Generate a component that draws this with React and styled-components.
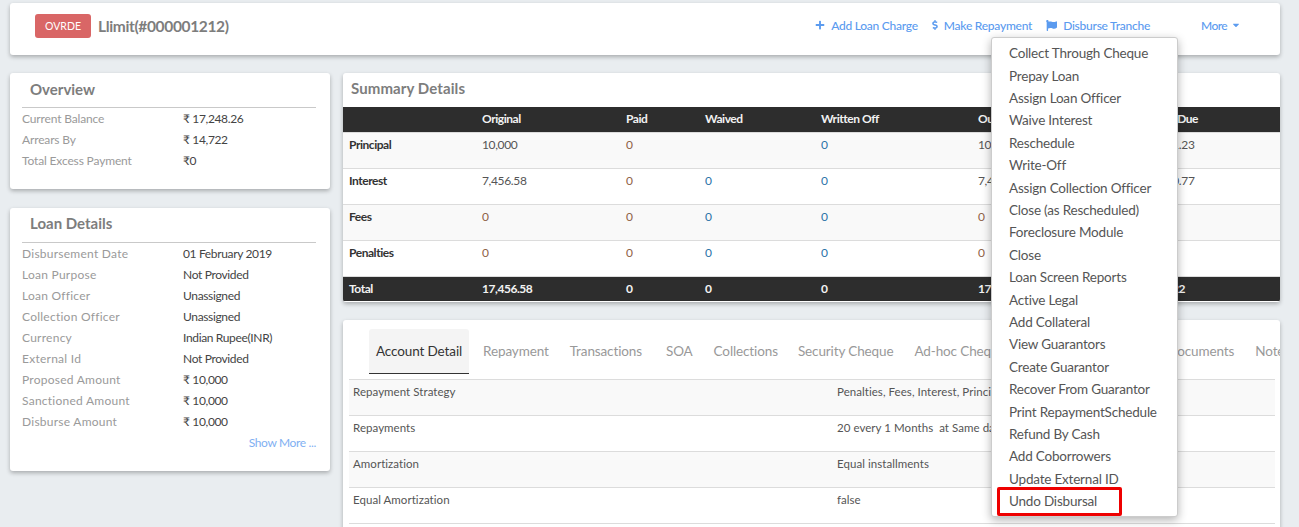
import React from "react";
import styled, { createGlobalStyle } from "styled-components";
import { FaPlus, FaDollarSign, FaFlag, FaCaretDown } from "react-icons/fa";

const GlobalStyle = createGlobalStyle`
  html, body {
    margin: 0;
    padding: 0;
    height: 527px;
    overflow: hidden;
    background: #e9edf0;
    font-family: "Lato", "Open Sans", sans-serif;
  }
  * { box-sizing: border-box; }
`;

const Page = styled.div`
  position: relative;
  width: 1280px;
  padding: 3px 0 0 10px;
`;

const Card = styled.div`
  background: #fff;
  border-radius: 3px;
  box-shadow: 0 2px 4px rgba(0, 0, 0, 0.28);
`;

const Header = styled(Card)`
  height: 52px;
  display: flex;
  align-items: center;
  padding: 0 39px 6px 25px;
  margin-bottom: 18px;
`;

const Badge = styled.span`
  width: 56px;
  height: 24px;
  border-radius: 3px;
  background: #d96666;
  color: #fff;
  font-size: 10.5px;
  display: flex;
  align-items: center;
  justify-content: center;
`;

const Title = styled.div`
  margin-left: 7px;
  padding-bottom: 1px;
  font-size: 15.5px;
  letter-spacing: -0.35px;
  font-weight: 700;
  color: #7d7d7d;
  flex: 1;
`;

const Action = styled.a`
  display: flex;
  align-items: center;
  gap: ${(p) => p.$gap || 6}px;
  margin-left: ${(p) => p.$left || 14}px;
  padding-bottom: 2px;
  font-size: 12px;
  letter-spacing: ${(p) => p.$spacing ?? -0.25}px;
  font-weight: 500;
  color: #5b9bef;
  svg { font-size: ${(p) => p.$icon || 10}px; }
`;

const Columns = styled.div`
  display: grid;
  grid-template-columns: 320px 937px;
  gap: 13px;
  align-items: start;
`;

const Side = styled.div`
  display: flex;
  flex-direction: column;
  gap: 19px;
`;

const Main = styled.div`
  display: flex;
  flex-direction: column;
  gap: 18px;
`;

const InfoCard = styled(Card)`
  padding: 5px 14px 0 12px;
  height: ${(p) => p.$height}px;
`;

const InfoTitle = styled.h3`
  margin: 0;
  padding: 0 0 0 8px;
  height: 30px;
  line-height: ${(p) => p.$line || 21}px;
  font-size: 15px;
  font-weight: 700;
  color: #7d7d7d;
  border-bottom: 1px solid #c9c9c9;
`;

const InfoRow = styled.div`
  display: grid;
  grid-template-columns: 161px 1fr;
  height: 21px;
  line-height: 21px;
  font-size: 12px;
`;

const InfoLabel = styled.span`
  color: #9a9a9a;
  letter-spacing: ${(p) => (p.$tight ? -0.15 : 0.25)}px;
`;

const InfoValue = styled.span`
  color: #444;
  letter-spacing: -0.35px;
`;

const ShowMore = styled.div`
  height: 21px;
  line-height: 21px;
  text-align: right;
  font-size: 12px;
  letter-spacing: -0.35px;
  color: #7fb0f2;
`;

const SummaryCard = styled(Card)`
  height: 229px;
  overflow: hidden;
`;

const SummaryTitle = styled.h3`
  margin: 0;
  height: 34px;
  padding: 4px 0 0 8px;
  line-height: 23px;
  font-size: 15px;
  letter-spacing: 0.1px;
  font-weight: 700;
  color: #7d7d7d;
`;

const Table = styled.table`
  width: 937px;
  border-collapse: collapse;
  table-layout: fixed;
  font-size: 12px;
  letter-spacing: -0.35px;
`;

const HeadCell = styled.th`
  height: 25px;
  padding: 0 6px ${(p) => p.$lift || 0}px;
  background: #2d2d2d;
  color: #f2f2f2;
  font-weight: 700;
  text-align: left;
  letter-spacing: -0.45px;
`;

const BodyRow = styled.tr`
  background: ${(p) => (p.$striped ? "#f9f9f9" : "#fff")};
  border-top: 1px solid #dcdcdc;
`;

const FootRow = styled.tr`
  border-top: 1px solid #dcdcdc;
`;

const Cell = styled.td`
  height: 36px;
  padding: 4px 6px 0;
  vertical-align: top;
  line-height: 16px;
  color: ${(p) => (p.$link ? "#2b74a8" : p.$paid ? "#8f6247" : "#555")};
  font-weight: ${(p) => (p.$head ? 700 : 400)};
  ${(p) => p.$head && "color: #333; letter-spacing: -0.45px;"}
`;

const TabsCard = styled(Card)`
  height: 220px;
  padding: 9px 5px 0 6px;
  overflow: hidden;
`;

const TabBar = styled.div`
  display: flex;
  padding-left: 20px;
  height: 51px;
  border-bottom: 1px solid #dcdcdc;
  white-space: nowrap;
`;

const Tab = styled.div`
  height: 45px;
  line-height: 44px;
  padding: 0 7px;
  margin-right: ${(p) => p.$gap ?? 7}px;
  font-size: 13.5px;
  letter-spacing: -0.12px;
  color: ${(p) => (p.$active ? "#333" : "#999")};
  background: ${(p) => (p.$active ? "#f4f4f4" : "transparent")};
  border-bottom: ${(p) => (p.$active ? "1px solid #333" : "none")};
  border-radius: 3px 3px 0 0;
  flex-shrink: 0;
`;

const DetailRow = styled.div`
  display: grid;
  grid-template-columns: 484px 1fr;
  height: 36px;
  padding: 4px 4px 0;
  line-height: 16px;
  font-size: 11.5px;
  letter-spacing: 0.05px;
  color: #555;
  background: ${(p) => (p.$striped ? "#f9f9f9" : "#fff")};
  border-bottom: 1px solid #dcdcdc;
  white-space: pre;
`;

const Menu = styled.div`
  position: absolute;
  left: 991px;
  top: 37px;
  width: 187px;
  height: 480px;
  padding: 4.3px 0 0 17px;
  background: #fff;
  border: 1px solid #ccc;
  border-radius: 3px;
  box-shadow: 0 3px 10px rgba(0, 0, 0, 0.3);
`;

const MenuItem = styled.div`
  height: 22.4px;
  line-height: 22.4px;
  font-size: 13.5px;
  letter-spacing: -0.2px;
  color: #555;
  white-space: nowrap;
`;

const Highlight = styled.div`
  position: absolute;
  left: 5px;
  top: 449px;
  width: 125px;
  height: 29px;
  border: 3px solid #ee0000;
  border-radius: 2px;
`;

const overview = [
  ["Current Balance", "₹ 17,248.26"],
  ["Arrears By", "₹ 14,722"],
  ["Total Excess Payment", "₹0"],
];

const loanDetails = [
  ["Disbursement Date", "01 February 2019"],
  ["Loan Purpose", "Not Provided"],
  ["Loan Officer", "Unassigned"],
  ["Collection Officer", "Unassigned"],
  ["Currency", "Indian Rupee(INR)"],
  ["External Id", "Not Provided"],
  ["Proposed Amount", "₹ 10,000"],
  ["Sanctioned Amount", "₹ 10,000"],
  ["Disburse Amount", "₹ 10,000"],
];

const colWidths = [133, 144, 79, 116, 157, 172, 136];
const headings = ["", "Original", "Paid", "Waived", "Written Off", "Outstanding", "Over Due"];

const summaryRows = [
  ["Principal", "10,000", "0", "", "0", "10,000", "7,291.23"],
  ["Interest", "7,456.58", "0", "0", "0", "7,456.58", "7,430.77"],
  ["Fees", "0", "0", "0", "0", "0", ""],
  ["Penalties", "0", "0", "0", "0", "0", ""],
];

const totals = ["Total", "17,456.58", "0", "0", "0", "17,456.58", "14,722"];

const tabs = [
  { label: "Account Detail" },
  { label: "Repayment" },
  { label: "Transactions", gap: 10 },
  { label: "SOA" },
  { label: "Collections", gap: 6 },
  { label: "Security Cheque" },
  { label: "Ad-hoc Cheques", gap: 142 },
  { label: "Documents" },
  { label: "Notes" },
];

const details = [
  ["Repayment Strategy", "Penalties, Fees, Interest, Principal order"],
  ["Repayments", "20 every 1 Months  at Same day of month"],
  ["Amortization", "Equal installments"],
  ["Equal Amortization", "false"],
];

const menuItems = [
  "Collect Through Cheque",
  "Prepay Loan",
  "Assign Loan Officer",
  "Waive Interest",
  "Reschedule",
  "Write-Off",
  "Assign Collection Officer",
  "Close (as Rescheduled)",
  "Foreclosure Module",
  "Close",
  "Loan Screen Reports",
  "Active Legal",
  "Add Collateral",
  "View Guarantors",
  "Create Guarantor",
  "Recover From Guarantor",
  "Print RepaymentSchedule",
  "Refund By Cash",
  "Add Coborrowers",
  "Update External ID",
  "Undo Disbursal",
];

const App = () => {
  return (
    <Page>
      <GlobalStyle />
      <Header>
        <Badge>OVRDE</Badge>
        <Title>Llimit(#000001212)</Title>
        <Action>
          <FaPlus />
          Add Loan Charge
        </Action>
        <Action $left={12} $gap={4}>
          <FaDollarSign />
          Make Repayment
        </Action>
        <Action $icon={11}>
          <FaFlag />
          Disburse Tranche
        </Action>
        <Action $left={51} $spacing={-0.6} $gap={4}>
          More
          <FaCaretDown />
        </Action>
      </Header>
      <Columns>
        <Side>
          <InfoCard $height={116}>
            <InfoTitle $line={23}>Overview</InfoTitle>
            {overview.map(([label, value]) => (
              <InfoRow key={label}>
                <InfoLabel $tight>{label}</InfoLabel>
                <InfoValue>{value}</InfoValue>
              </InfoRow>
            ))}
          </InfoCard>
          <InfoCard $height={263}>
            <InfoTitle>Loan Details</InfoTitle>
            {loanDetails.map(([label, value]) => (
              <InfoRow key={label}>
                <InfoLabel>{label}</InfoLabel>
                <InfoValue>{value}</InfoValue>
              </InfoRow>
            ))}
            <ShowMore>Show More ...</ShowMore>
          </InfoCard>
        </Side>
        <Main>
          <SummaryCard>
            <SummaryTitle>Summary Details</SummaryTitle>
            <Table>
              <colgroup>
                {colWidths.map((w, i) => (
                  <col key={i} width={w} />
                ))}
              </colgroup>
              <thead>
                <tr>
                  {headings.map((h, i) => (
                    <HeadCell key={i} $lift={2}>{h}</HeadCell>
                  ))}
                </tr>
              </thead>
              <tbody>
                {summaryRows.map((row, r) => (
                  <BodyRow key={row[0]} $striped={r % 2 === 0}>
                    {row.map((v, i) => (
                      <Cell key={i} $head={i === 0} $paid={i === 2 || (i === 1 && v === "0") || (i === 5 && v === "0")} $link={i === 3 || i === 4}>
                        {v}
                      </Cell>
                    ))}
                  </BodyRow>
                ))}
              </tbody>
              <tfoot>
                <FootRow>
                  {totals.map((v, i) => (
                    <HeadCell key={i} $lift={1}>{v}</HeadCell>
                  ))}
                </FootRow>
              </tfoot>
            </Table>
          </SummaryCard>
          <TabsCard>
            <TabBar>
              {tabs.map((t, i) => (
                <Tab key={t.label} $active={i === 0} $gap={t.gap}>
                  {t.label}
                </Tab>
              ))}
            </TabBar>
            {details.map(([label, value], i) => (
              <DetailRow key={label} $striped={i % 2 === 0}>
                <span>{label}</span>
                <span>{value}</span>
              </DetailRow>
            ))}
          </TabsCard>
        </Main>
      </Columns>
      <Menu>
        {menuItems.map((m) => (
          <MenuItem key={m}>{m}</MenuItem>
        ))}
        <Highlight />
      </Menu>
    </Page>
  );
};

export default App;
